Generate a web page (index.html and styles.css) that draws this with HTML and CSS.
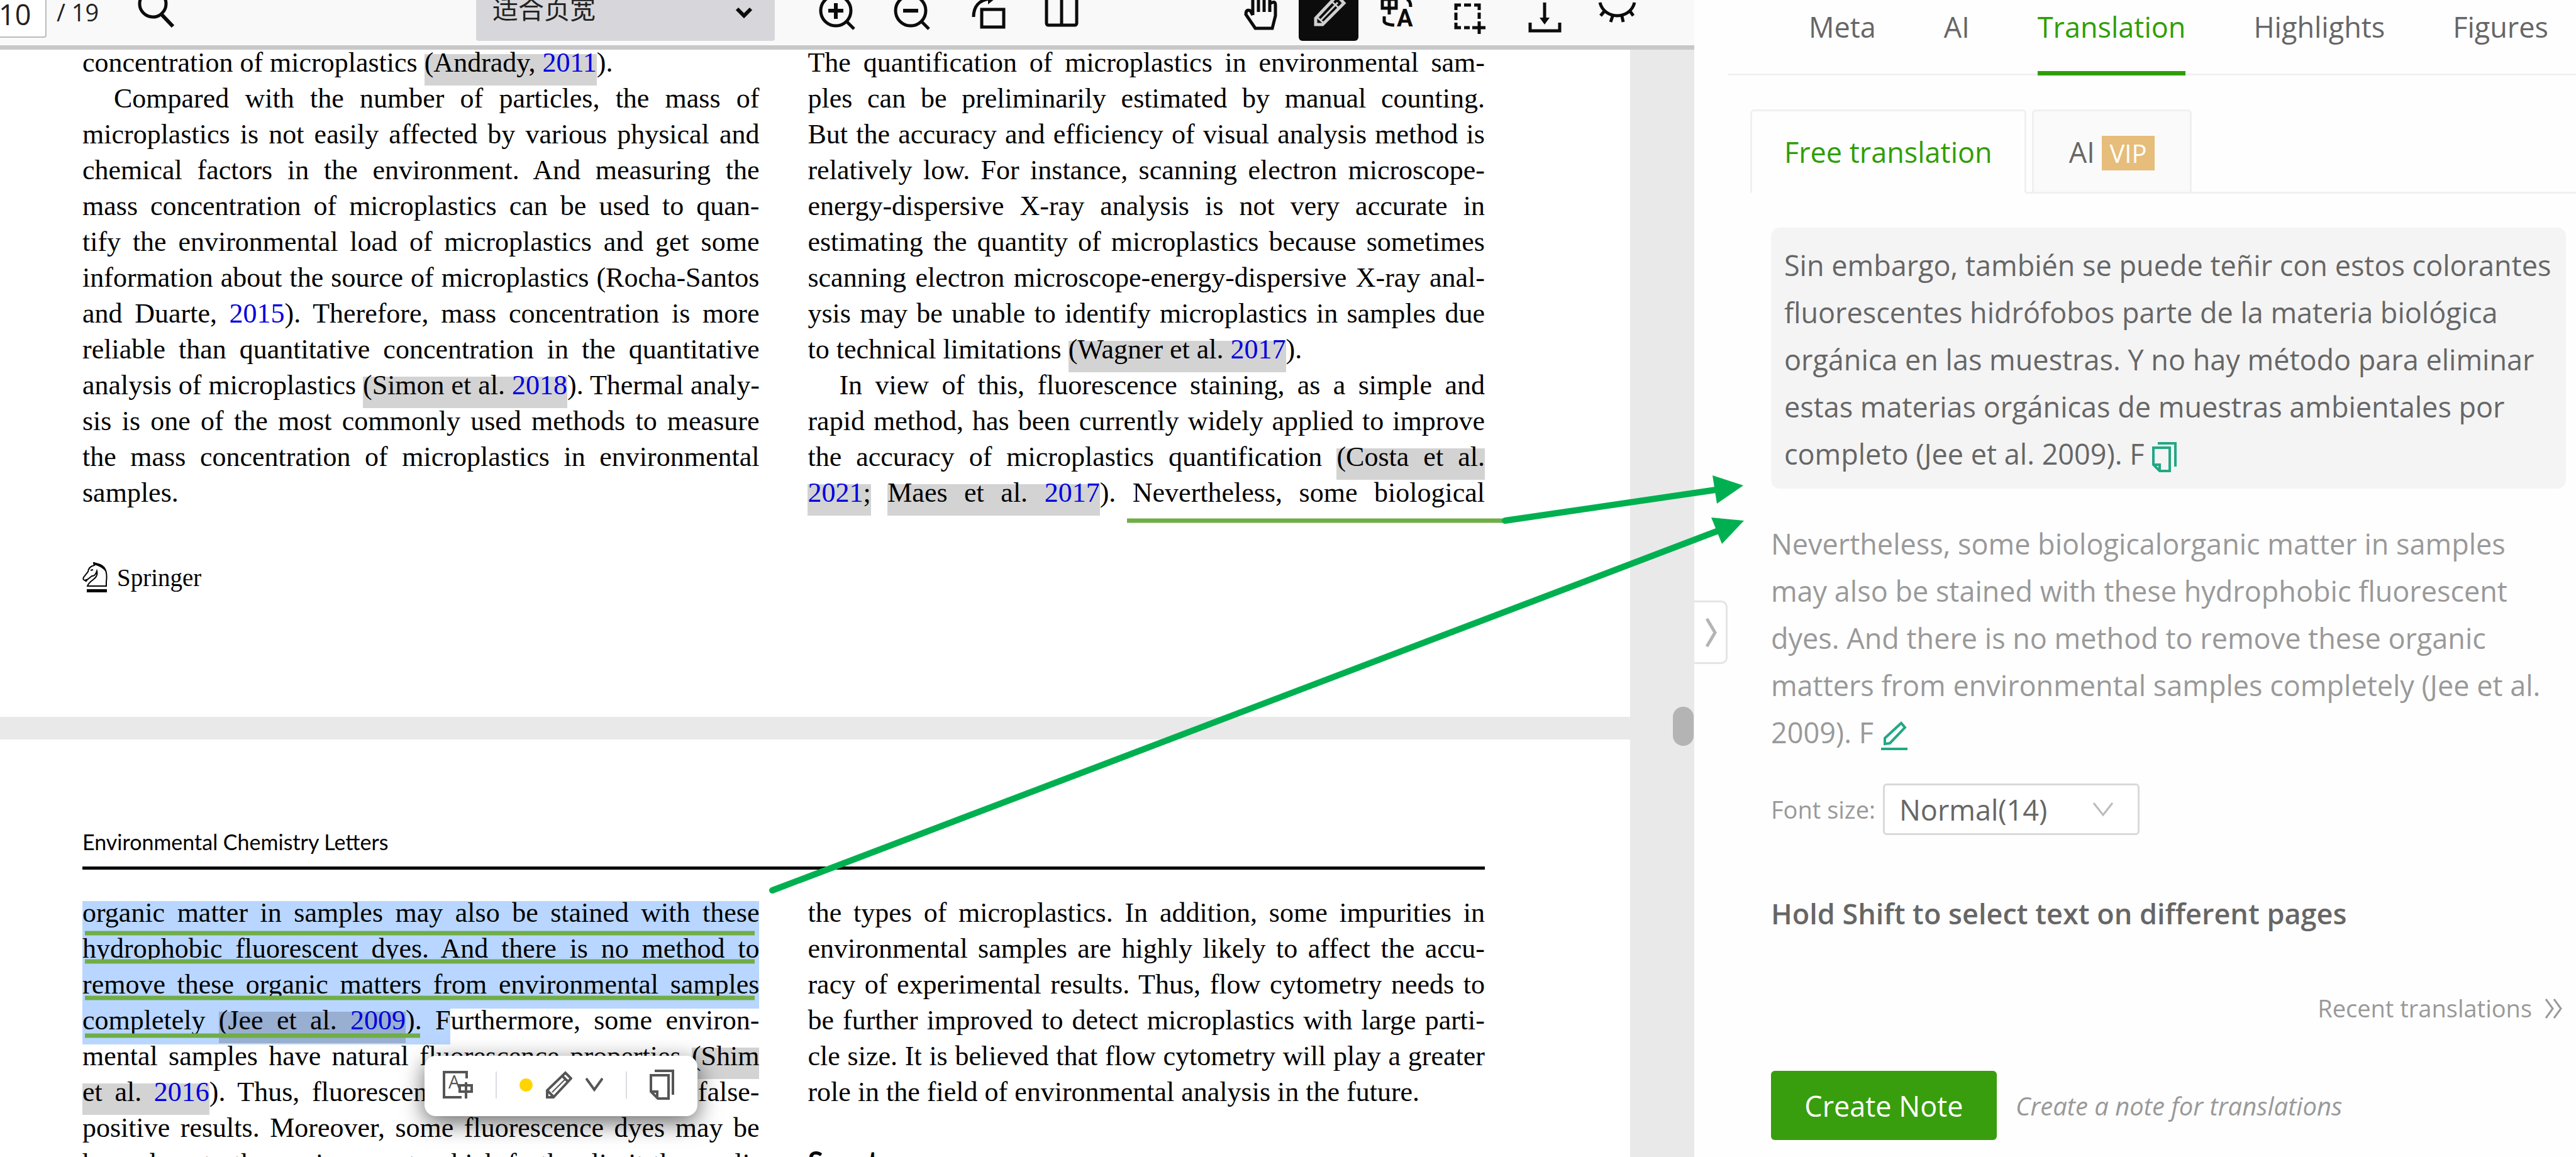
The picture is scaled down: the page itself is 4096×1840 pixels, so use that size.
FILE: index.html
```
<!DOCTYPE html>
<html lang="en">
<head>
  <meta charset="UTF-8">
  <meta name="viewport" content="width=device-width, initial-scale=1.0">
  <title>PDF reader - Translation</title>
  <link rel="stylesheet" href="styles.css">
</head>
<body>
  <main class="viewer">
    <div class="toolbar">
      <input class="page-input" type="text" value="10" aria-label="Page">
      <span class="page-total">/ 19</span>
      <button class="tool search" aria-label="Search">
        <svg viewBox="0 0 95 95"><circle cx="42" cy="36" r="21"/><path d="M55 52L74 72" stroke-width="6"/></svg>
      </button>
      <div class="zoom-box">
        <select class="zoom-select" aria-label="Zoom">
          <option>适合页宽</option>
        </select>
        <svg class="zoom-arrow" viewBox="0 0 28 20"><path d="M3 4L14 15L25 4"/></svg>
      </div>
      <div class="tools tools-left">
        <button class="tool" aria-label="Zoom in">
          <svg viewBox="0 0 95 95"><circle cx="45" cy="47" r="24"/><path d="M33 47H57M45 35V60" stroke-width="6"/><path d="M62 64L74 76"/></svg>
        </button>
        <button class="tool" aria-label="Zoom out">
          <svg viewBox="0 0 95 95"><circle cx="45" cy="47" r="24"/><path d="M33 47H57" stroke-width="6"/><path d="M62 64L74 76"/></svg>
        </button>
        <button class="tool" aria-label="Rotate">
          <svg viewBox="0 0 95 95"><rect x="39" y="45" width="35" height="28"/><path d="M26 57C26 40 35 30 52 28"/><path d="M49 18L60 28L49 37Z" fill="#0c0c0d" stroke="none"/></svg>
        </button>
        <button class="tool" aria-label="Two pages">
          <svg viewBox="0 0 95 95"><rect x="23" y="22" width="48" height="48" rx="3"/><path d="M47 22V70"/></svg>
        </button>
      </div>
      <div class="tools tools-right">
        <button class="tool" aria-label="Hand">
          <svg viewBox="0 0 95 95"><path d="M42 54V24Q42 20 46 20T51 24V49M51 22Q51 16 55 16T60 22V49M60 24Q60 19 64 19T69 24V49M69 36Q78 30 78 38V55L73 75H46L31 53Q31 44 38 47L42 54"/></svg>
        </button>
        <button class="tool active" aria-label="Highlight">
          <svg viewBox="0 0 95 95"><path d="M27 69V59L61 23L72 35L38 69Z"/><path d="M30 58L40 67M35 62L62 34M52 32L64 43" stroke-width="3"/></svg>
        </button>
        <button class="tool" aria-label="Translate">
          <svg viewBox="0 0 95 95"><path d="M18 29H40V43H18ZM29 20V53M57 29Q63 31 63 41M21 56V64Q22 69 37 70"/><text x="41" y="72">A</text></svg>
        </button>
        <button class="tool" aria-label="Select area">
          <svg viewBox="0 0 95 95"><path d="M20 46V38H28M33 38H44M49 38H57V46M57 50V60M20 50V62M20 66V74H28M33 74H42M46 74H67M57 64V84"/></svg>
        </button>
        <button class="tool" aria-label="Download">
          <svg viewBox="0 0 95 95"><path d="M46 34V60"/><path d="M38 58H54L46 69Z" fill="#0c0c0d" stroke="none"/><path d="M23 66V79H70V66"/></svg>
        </button>
        <button class="tool" aria-label="Hide annotations">
          <svg viewBox="0 0 95 95"><path d="M19 34C26 62 67 62 74 34M26 48L20 55M39 56L36 65M54 56L56 65M67 48L72 55"/></svg>
        </button>
      </div>
    </div>

    <div class="pages">
      <article class="page page-first">
        <div class="columns">
          <div class="column">
            <span class="line end">concentration of microplastics <span class="cite">(Andrady, <a href="#">2011</a></span>).</span>
            <span class="line indent">Compared with the number of particles, the mass of</span>
            <span class="line">microplastics is not easily affected by various physical and</span>
            <span class="line">chemical factors in the environment. And measuring the</span>
            <span class="line">mass concentration of microplastics can be used to quan-</span>
            <span class="line">tify the environmental load of microplastics and get some</span>
            <span class="line">information about the source of microplastics (Rocha-Santos</span>
            <span class="line">and Duarte, <a href="#">2015</a>). Therefore, mass concentration is more</span>
            <span class="line">reliable than quantitative concentration in the quantitative</span>
            <span class="line">analysis of microplastics <span class="cite">(Simon et al. <a href="#">2018</a></span>). Thermal analy-</span>
            <span class="line">sis is one of the most commonly used methods to measure</span>
            <span class="line">the mass concentration of microplastics in environmental</span>
            <span class="line end">samples.</span>
          </div>
          <div class="column">
            <span class="line">The quantification of microplastics in environmental sam-</span>
            <span class="line">ples can be preliminarily estimated by manual counting.</span>
            <span class="line">But the accuracy and efficiency of visual analysis method is</span>
            <span class="line">relatively low. For instance, scanning electron microscope-</span>
            <span class="line">energy-dispersive X-ray analysis is not very accurate in</span>
            <span class="line">estimating the quantity of microplastics because sometimes</span>
            <span class="line">scanning electron microscope-energy-dispersive X-ray anal-</span>
            <span class="line">ysis may be unable to identify microplastics in samples due</span>
            <span class="line end">to technical limitations <span class="cite">(Wagner et al. <a href="#">2017</a></span>).</span>
            <span class="line indent">In view of this, fluorescence staining, as a simple and</span>
            <span class="line">rapid method, has been currently widely applied to improve</span>
            <span class="line">the accuracy of microplastics quantification <span class="cite">(Costa et al.</span></span>
            <span class="line"><span class="cite"><a href="#">2021</a>;</span> <span class="cite">Maes et al. <a href="#">2017</a></span>). Nevertheless, some biological</span>
          </div>
        </div>
        <div class="publisher">
          <svg class="springer-logo" viewBox="0 0 40 49"><path d="M8 38H38V31Q41 9 28 4L18 1L19 5Q10 7 9 15L2 24Q0 28 4 29L9 27L15 22Q20 23 23 14Q25 22 18 27Q9 34 8 38ZM8 28L5 31M13 13L17 12" fill="none" stroke="#000" stroke-width="2"/><path d="M7 43H39V48H7Z"/><path d="M17 0L28 3Q34 7 37 15Q31 7 18 4Z"/></svg>
          <span>Springer</span>
        </div>
      </article>

      <article class="page page-second">
        <header class="journal">Environmental Chemistry Letters</header>
        <div class="columns">
          <div class="column">
            <span class="line"><span class="selected">organic matter in samples may also be stained with these</span></span>
            <span class="line"><span class="selected">hydrophobic fluorescent dyes. And there is no method to</span></span>
            <span class="line"><span class="selected">remove these organic matters from environmental samples</span></span>
            <span class="line"><span class="selected">completely <span class="cite">(Jee et al. <a href="#">2009</a></span>). F</span>urthermore, some environ-</span>
            <span class="line">mental samples have natural fluorescence properties <span class="cite">(Shim</span></span>
            <span class="line"><span class="cite">et al. <a href="#">2016</a></span>). Thus, fluorescence staining may cause false-</span>
            <span class="line">positive results. Moreover, some fluorescence dyes may be</span>
            <span class="line">hazardous to the environment, which further limit the appli-</span>
          </div>
          <div class="column">
            <span class="line">the types of microplastics. In addition, some impurities in</span>
            <span class="line">environmental samples are highly likely to affect the accu-</span>
            <span class="line">racy of experimental results. Thus, flow cytometry needs to</span>
            <span class="line">be further improved to detect microplastics with large parti-</span>
            <span class="line">cle size. It is believed that flow cytometry will play a greater</span>
            <span class="line end">role in the field of environmental analysis in the future.</span>
            <h2>Spectroscopy</h2>
          </div>
        </div>
      </article>
    </div>
    <div class="scroll-thumb"></div>
  </main>

  <aside class="side">
    <nav class="tabs">
      <a href="#">Meta</a>
      <a href="#">AI</a>
      <a href="#" class="current">Translation</a>
      <a href="#">Highlights</a>
      <a href="#">Figures</a>
    </nav>
    <div class="subtabs">
      <button class="subtab current">Free translation</button>
      <button class="subtab">AI <span class="vip">VIP</span></button>
    </div>
    <div class="panel">
      <p class="result">Sin embargo, también se puede teñir con estos colorantes<br>
        fluorescentes hidrófobos parte de la materia biológica<br>
        orgánica en las muestras. Y no hay método para eliminar<br>
        estas materias orgánicas de muestras ambientales por<br>
        completo (Jee et al. 2009). F
        <button class="inline-icon" aria-label="Copy"><svg viewBox="0 0 42 50"><path d="M3 10H29V47H13L3 37ZM3 37H13V47M10 3H38V40"/></svg></button>
      </p>
      <p class="source">Nevertheless, some biologicalorganic matter in samples<br>
        may also be stained with these hydrophobic fluorescent<br>
        dyes. And there is no method to remove these organic<br>
        matters from environmental samples completely (Jee et al.<br>
        2009). F
        <button class="inline-icon" aria-label="Edit"><svg viewBox="0 0 42 50"><path d="M6 38V29L32 5L38 12L14 37ZM0 46H42"/></svg></button>
      </p>
      <div class="font-row">
        <label for="font-size">Font size:</label>
        <div class="font-box">
          <select id="font-size">
            <option>Normal(14)</option>
          </select>
          <svg viewBox="0 0 34 24"><path d="M2 2L17 21L32 2"/></svg>
        </div>
      </div>
      <h3>Hold Shift to select text on different pages</h3>
      <a class="recent" href="#">Recent translations
        <svg viewBox="0 0 30 34"><path d="M2 2L13 17L2 32M15 2L26 17L15 32"/></svg>
      </a>
      <div class="note-row">
        <button class="create">Create Note</button>
        <em>Create a note for translations</em>
      </div>
    </div>
    <button class="collapse" aria-label="Collapse panel">
      <svg viewBox="0 0 20 48"><path d="M3 2L16 24L3 46"/></svg>
    </button>
  </aside>

  <!-- pen marks and arrows drawn over the page -->
  <svg class="marks" viewBox="0 0 4096 1840">
    <g class="underline">
      <path d="M135 1484H1200M135 1529H1200M135 1587H1200M135 1647H668M1792 828H2393"/>
    </g>
    <g class="arrow">
      <path d="M2393 828L2735 778M1228 1416L2740 841"/>
      <path class="head" d="M2772 772L2723 756L2730 801ZM2773 828L2721 823L2738 865Z"/>
    </g>
  </svg>

  <div class="popup">
    <button aria-label="Translate selection">
      <svg width="48" height="44" viewBox="0 0 48 44"><path d="M38 12V2H2V42H30M27 23H46V33H27ZM37 18V44"/><text x="9" y="28">A</text></svg>
    </button>
    <i class="sep"></i>
    <button class="pen" aria-label="Highlight selection">
      <i class="dot"></i>
      <svg width="42" height="44" viewBox="0 0 42 44"><path d="M2 42V31L31 3L40 12L12 42ZM3 32L12 41M26 8L35 17"/><path d="M10 34L31 13" stroke-width="2"/></svg>
      <svg width="28" height="22" viewBox="0 0 28 22"><path d="M1 1L14 19L27 1"/></svg>
    </button>
    <i class="sep"></i>
    <button aria-label="Copy selection">
      <svg width="39" height="48" viewBox="0 0 39 48"><path d="M2 9H30V46H13L2 35ZM2 35H12V45M8 2H37V40"/></svg>
    </button>
  </div>
</body>
</html>
```
FILE: styles.css
```
* {
  box-sizing: border-box;
}
body {
  margin: 0;
  height: 100vh;
  display: flex;
  position: relative;
  overflow: hidden;
  background: #fff;
  font-family: "Open Sans", "Noto Sans", "Noto Sans CJK SC", sans-serif;
  color: #666;
}
button {
  border: 0;
  padding: 0;
  background: none;
  font: inherit;
  color: inherit;
  cursor: pointer;
}
a {
  text-decoration: none;
  color: inherit;
}
svg {
  display: block;
}

/* viewer */
.viewer {
  width: 65.77%;
  height: 100%;
  position: relative;
  display: flex;
  flex-direction: column;
  background: #e9e9e9;
}
.toolbar {
  flex: none;
  height: 79px;
  padding: 0 74px 7px 0;
  border-bottom: 7px solid #c8c8c8;
  background: #f9f9fa;
  display: flex;
  align-items: flex-end;
  position: relative;
  z-index: 1;
  overflow: hidden;
  color: #222;
}
.page-input {
  width: 84px;
  height: 90px;
  margin: 0 0 5px -10px;
  padding: 14px 0 0 6px;
  border: 2px solid #bbb;
  border-radius: 4px;
  background: #fff;
  font: 45px "Open Sans", sans-serif;
  color: #222;
}
.page-total {
  margin-left: 16px;
  padding-bottom: 19px;
  font-size: 38px;
  line-height: 54px;
}
.tool {
  flex: none;
  width: 95px;
  height: 95px;
  border-radius: 6px;
}
.tool svg {
  width: 95px;
  height: 95px;
  fill: none;
  stroke: #0c0c0d;
  stroke-width: 5px;
}
.tool text {
  font: bold 38px Roboto, sans-serif;
  fill: #0c0c0d;
  stroke: none;
}
.tool.active {
  background: #0c0c0d;
}
.tool.active svg {
  stroke: #d0d0d0;
}
.search {
  margin-left: 44px;
}
.zoom-box {
  position: relative;
  margin-left: auto;
}
.zoom-select {
  appearance: none;
  width: 475px;
  height: 95px;
  padding: 0 0 12px 26px;
  border: 0;
  border-radius: 4px;
  background: #d7d7db;
  font: 41px "Noto Sans CJK SC", sans-serif;
  color: #222;
}
.zoom-arrow {
  position: absolute;
  right: 35px;
  top: 40px;
  width: 28px;
  fill: none;
  stroke: #0c0c0d;
  stroke-width: 6px;
}
.tools {
  display: flex;
}
.tools-left {
  gap: 24px;
  margin: 0 214px 0 52px;
}
.tools-right {
  gap: 20px;
}

/* pdf pages */
.pages {
  flex: 1;
  min-height: 0;
  overflow: hidden;
  margin-right: 102px;
  display: flex;
  flex-direction: column;
  gap: 36px;
  font-family: "Liberation Serif", serif;
  font-size: 44px;
  line-height: 57px;
  color: #000;
}
.page {
  flex: none;
  background: #fff;
  padding: 0 231px 0 131px;
}
.page-first {
  margin-top: -8px;
  padding-bottom: 197px;
}
.page-second {
  padding-top: 139px;
}
.columns {
  display: grid;
  grid-template-columns: minmax(0, 1fr) minmax(0, 1fr);
  gap: 77px;
}
.line {
  display: block;
  white-space: nowrap;
  text-align: justify;
  text-align-last: justify;
}
.line.end {
  text-align-last: left;
}
.line.indent {
  padding-left: 50px;
}
.line a {
  color: #0000e0;
}
.cite {
  padding-bottom: 12px;
  background: linear-gradient(transparent 11px, #d3d3d3 11px);
}
.selected {
  padding-bottom: 14px;
  background: linear-gradient(transparent 6px, #b8d6ff 6px);
}
.selected .cite {
  background: linear-gradient(transparent 11px, #98afd1 11px);
}
.publisher {
  display: flex;
  align-items: center;
  gap: 15px;
  margin-top: 82px;
  font-size: 39px;
  line-height: 49px;
}
.springer-logo {
  width: 40px;
  height: 49px;
}
.journal {
  padding-bottom: 15px;
  margin-bottom: 40px;
  border-bottom: 5px solid #000;
  font: 34px/48px Lato, sans-serif;
}
.column h2 {
  margin: 54px 0 0;
  font: bold 45px/57px Lato, sans-serif;
}
.scroll-thumb {
  position: absolute;
  right: 1px;
  top: 1124px;
  width: 33px;
  height: 62px;
  border-radius: 16px;
  background: #b4b4b4;
}

/* side panel */
.side {
  flex: 1;
  min-width: 0;
  position: relative;
  background: #fefefe;
  font-size: 45px;
}
.tabs {
  height: 120px;
  margin-left: 54px;
  padding-left: 128px;
  border-bottom: 3px solid #f0f0f0;
  display: flex;
  gap: 108px;
  white-space: nowrap;
}
.tabs a {
  height: 120px;
  padding-top: 12px;
  line-height: 62px;
}
.tabs .current {
  border-bottom: 7px solid #2f9e06;
  color: #2f9e06;
  font-weight: 500;
}
.subtabs {
  display: flex;
  gap: 9px;
  margin: 54px 0 0 89px;
  box-shadow: inset 0 -3px #f0f0f0;
}
.subtab {
  height: 134px;
  padding: 0 56px;
  border: 3px solid #f0f0f0;
  border-radius: 6px 6px 0 0;
  background: #fafafa;
  white-space: nowrap;
}
.subtab.current {
  padding: 0 51px;
  border-bottom-color: #fefefe;
  background: #fefefe;
  color: #2f9e06;
  font-weight: 500;
}
.vip {
  display: inline-block;
  padding: 0 12px;
  background: #e6bd7a;
  color: #fff;
  font-size: 40px;
  line-height: 55px;
}
.panel {
  padding: 54px 16px 0 122px;
  line-height: 75px;
}
.result {
  margin: 0;
  padding: 22px 0 18px 21px;
  border-radius: 14px;
  background: #f4f4f4;
  white-space: nowrap;
}
.source {
  margin: 50px 0 0;
  color: #999;
  white-space: nowrap;
}
.inline-icon {
  vertical-align: middle;
}
.inline-icon svg {
  width: 42px;
  height: 50px;
  fill: none;
  stroke: #22a884;
  stroke-width: 4px;
}
.font-row {
  display: flex;
  align-items: center;
  gap: 12px;
  margin-top: 44px;
  font-size: 38px;
  color: #999;
}
.font-box {
  position: relative;
}
.font-box select {
  appearance: none;
  display: block;
  width: 408px;
  height: 82px;
  padding: 0 26px 0 23px;
  border: 3px solid #d9d9d9;
  border-radius: 6px;
  background: #fff;
  font: 45px "Open Sans", sans-serif;
  color: #666;
}
.font-box svg {
  position: absolute;
  right: 41px;
  top: 29px;
  width: 34px;
  fill: none;
  stroke: #bbb;
  stroke-width: 3px;
}
.panel h3 {
  margin: 87px 0 0;
  font-size: 45px;
  font-weight: 600;
}
.recent {
  display: flex;
  justify-content: flex-end;
  align-items: center;
  gap: 20px;
  padding-right: 4px;
  margin-top: 76px;
  font-size: 38px;
  color: #999;
}
.recent svg {
  width: 30px;
  fill: none;
  stroke: #999;
  stroke-width: 3px;
}
.note-row {
  display: flex;
  align-items: center;
  gap: 30px;
  margin-top: 62px;
  font-size: 40px;
  color: #999;
}
.create {
  width: 359px;
  height: 110px;
  border-radius: 6px;
  background: #389e0d;
  color: #fff;
  font-size: 45px;
  font-weight: 500;
}
.collapse {
  position: absolute;
  left: 0;
  top: 955px;
  width: 53px;
  height: 101px;
  border: 3px solid #e4e4e4;
  border-left: 0;
  border-radius: 0 10px 10px 0;
  background: #fff;
}
.collapse svg {
  width: 20px;
  margin-left: 17px;
  fill: none;
  stroke: #b4b4b4;
  stroke-width: 5px;
}

/* overlays */
.marks {
  position: absolute;
  left: 0;
  top: 0;
  width: 100%;
  z-index: 2;
  pointer-events: none;
}
.underline {
  stroke: #70ad47;
  stroke-width: 7px;
}
.arrow {
  fill: none;
  stroke: #00b050;
  stroke-width: 10px;
  stroke-linecap: round;
}
.head {
  fill: #00b050;
  stroke: none;
}
.popup {
  position: absolute;
  left: 675px;
  top: 1679px;
  z-index: 3;
  height: 96px;
  padding: 0 37px 4px 29px;
  border-radius: 18px;
  background: #fff;
  box-shadow: 0 10px 36px rgba(0, 0, 0, 0.6);
  display: flex;
  align-items: center;
  gap: 36px;
}
.popup svg {
  fill: none;
  stroke: #555;
  stroke-width: 4px;
}
.popup text {
  font: 29px "Open Sans", sans-serif;
  fill: #555;
  stroke: none;
}
.pen {
  display: flex;
  align-items: center;
  gap: 21px;
}
.dot {
  width: 21px;
  height: 21px;
  border-radius: 50%;
  background: #ffd400;
}
.sep {
  width: 2px;
  height: 43px;
  background: #dcdce2;
}
```
